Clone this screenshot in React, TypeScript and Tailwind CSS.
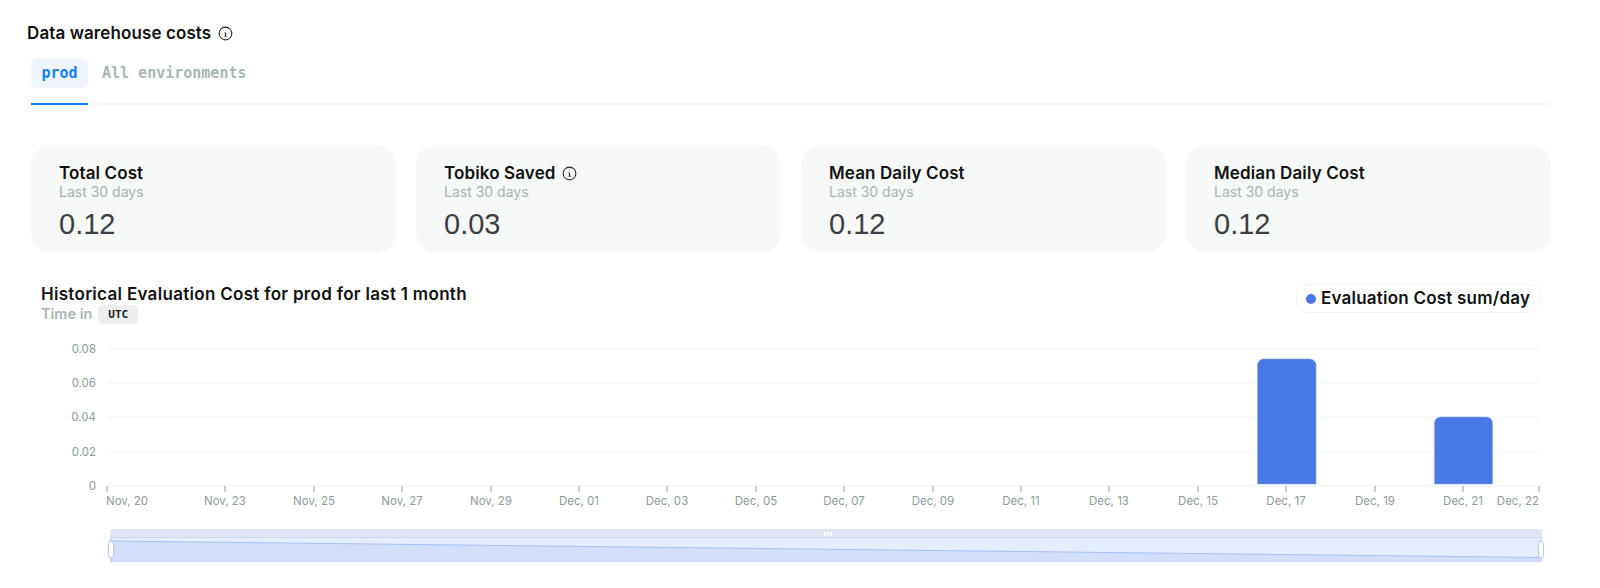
import React from 'react';

const INTER = "font-['Inter','Liberation_Sans',sans-serif]";

const stats = [
  { title: 'Total Cost', value: '0.12' },
  { title: 'Tobiko Saved', value: '0.03', info: true },
  { title: 'Mean Daily Cost', value: '0.12' },
  { title: 'Median Daily Cost', value: '0.12' },
];

const gridLines = [
  { y: 348, label: '0.08' },
  { y: 382, label: '0.06' },
  { y: 416, label: '0.04' },
  { y: 451, label: '0.02' },
];

const ticks = [
  { x: 107, label: 'Nov, 20', anchor: 'start' },
  { x: 225, label: 'Nov, 23' },
  { x: 314, label: 'Nov, 25' },
  { x: 402, label: 'Nov, 27' },
  { x: 491, label: 'Nov, 29' },
  { x: 579, label: 'Dec, 01' },
  { x: 667, label: 'Dec, 03' },
  { x: 756, label: 'Dec, 05' },
  { x: 844, label: 'Dec, 07' },
  { x: 933, label: 'Dec, 09' },
  { x: 1021, label: 'Dec, 11' },
  { x: 1109, label: 'Dec, 13' },
  { x: 1198, label: 'Dec, 15' },
  { x: 1286, label: 'Dec, 17' },
  { x: 1375, label: 'Dec, 19' },
  { x: 1463, label: 'Dec, 21' },
  { x: 1539, label: 'Dec, 22', anchor: 'end' },
];

const InfoIcon: React.FC<{ size: number }> = ({ size }) => (
  <svg width={size} height={size} viewBox="0 0 16 16" fill="none" stroke="#222" strokeWidth="1.1">
    <circle cx="8" cy="8" r="6.8" />
    <path d="M8 7.2v3.8M6.9 11h2.2M7 7.2h1" />
    <circle cx="8" cy="4.9" r="0.5" fill="#222" stroke="none" />
  </svg>
);

const StatCard: React.FC<{ title: string; value: string; info?: boolean }> = ({ title, value, info }) => (
  <div className="flex h-[108px] flex-col rounded-[20px] bg-[#f7f9f8] pl-[28px] pt-[19px]">
    <div className="flex items-center gap-[6px] text-[17px] font-semibold leading-[19px] tracking-[0.12px] text-[#111]">
      {title}
      {info && <InfoIcon size={15} />}
    </div>
    <div className="text-[14px] leading-[17px] text-[#a8b4b3]">Last 30 days</div>
    <div className="mt-[7px] font-['Liberation_Sans',sans-serif] text-[29px] leading-[34px] text-[#3a3f45]">{value}</div>
  </div>
);

const CostChart: React.FC = () => (
  <svg className="mt-[7px] block" width={1520} height={258} viewBox="31 330 1520 258">
    {gridLines.map(({ y, label }) => (
      <g key={y}>
        <line x1={107} x2={1539} y1={y} y2={y} stroke="#f2f3f4" />
        <text x={96} y={y + 4} textAnchor="end" fontSize={11.5} fill="#8f9b9b" fontFamily="Inter">
          {label}
        </text>
      </g>
    ))}
    <text x={96} y={489} textAnchor="end" fontSize={11.5} fill="#8f9b9b" fontFamily="Inter">
      0
    </text>
    <line x1={107} x2={1539} y1={485} y2={485} stroke="#eef0f1" />
    <path d="M1257.5 483V364a6 6 0 0 1 6-6h46.500a6 6 0 0 1 6 6v119z" fill="#4878e3" stroke="#8ba9ee" strokeWidth="0.6" />
    <path d="M1434.500 483V422a6 6 0 0 1 6-6h46a6 6 0 0 1 6 6v61z" fill="#4878e3" stroke="#8ba9ee" strokeWidth="0.6" />
    {ticks.map(({ x, label, anchor }) => (
      <g key={label}>
        <line x1={x} x2={x} y1={485} y2={491} stroke="#93a0a0" />
        <text
          x={anchor === 'start' ? x - 1 : x}
          y={504}
          textAnchor={anchor ?? 'middle'}
          fontSize={11.5}
          fill="#8f9b9b"
          fontFamily="Inter"
        >
          {label}
        </text>
      </g>
    ))}
    {/* range slider */}
    <path d="M110 536v-6a2 2 0 0 1 2-2h1428a2 2 0 0 1 2 2v6z" fill="#e0e5f3" />
    <rect x={110} y={536} width={1431} height={25} fill="#d3defa" />
    <path d="M110 540L1541 556.500V536.500H110z" fill="#e5ecfd" />
    <line x1={110} x2={1541} y1={540} y2={556.5} stroke="#a9c0f7" />
    <line x1={110} x2={1541} y1={536.5} y2={536.5} stroke="#cdd6ee" />
    <rect x={824} y={531} width={2} height={3.5} fill="#fff" />
    <rect x={827} y={531} width={2} height={3.5} fill="#fff" />
    <rect x={830} y={531} width={2} height={3.5} fill="#fff" />
    <line x1={111} x2={111} y1={536} y2={561} stroke="#b9c7ea" />
    <line x1={1541} x2={1541} y1={536} y2={561} stroke="#b9c7ea" />
    <rect x={108.5} y={540.5} width={5} height={16} rx={2} fill="#fff" stroke="#b9c7ea" />
    <rect x={1538.5} y={540.5} width={5} height={16} rx={2} fill="#fff" stroke="#b9c7ea" />
  </svg>
);

export default function App() {
  return (
    <div className={`h-[588px] w-[1600px] overflow-hidden bg-white pl-[31px] pt-[23px] ${INTER}`}>
      <div className="w-[1520px]">
        <div className="-ml-[4px] flex items-center gap-[7px] text-[17px] font-semibold leading-[20px] tracking-[0.1px] text-[#111]">
          Data warehouse costs
          <InfoIcon size={15} />
        </div>
        <div className="mt-[15px] flex h-[47px] items-start gap-[14px] border-b-2 border-[#f6f7f8] font-['DejaVu_Sans_Mono',monospace] text-[15px] font-bold">
          <div className="-mb-[2px] h-[47px] border-b-2 border-[#0a84ff]">
            <div className="flex h-[30px] w-[57px] items-center justify-center rounded-[6px] bg-[#f1f6fe] pt-[1px] text-[#0f80fb]">prod</div>
          </div>
          <div className="flex h-[30px] items-center pt-[1px] text-[#a9b7b5]">All environments</div>
        </div>

        <div className="mt-[40px] grid grid-cols-4 gap-[20px]">
          {stats.map((stat) => (
            <StatCard key={stat.title} {...stat} />
          ))}
        </div>

        <div className="mt-[31px] flex items-start justify-between px-[10px]">
          <div>
            <div className="text-[17px] font-semibold leading-[20px] tracking-[0.3px] text-[#111]">
              Historical Evaluation Cost for prod for last 1 month
            </div>
            <div className="flex items-center gap-[6px] text-[14.5px] font-semibold leading-[20px] text-[#a8b4b3]">
              Time in
              <span className="rounded-[5px] bg-[#edeef0] px-[10px] font-['DejaVu_Sans_Mono',monospace] text-[11px] font-bold leading-[19px] text-[#222]">UTC</span>
            </div>
          </div>
          <div className="flex h-[29px] w-[245px] items-center gap-[5px] rounded-[12px] border border-[#f2f3f5] pl-[9px] pt-[1px] text-[17px] font-semibold tracking-[0.22px] text-[#111]">
            <span className="h-[10px] w-[10px] rounded-full bg-[#4878e3]" />
            Evaluation Cost sum/day
          </div>
        </div>

        <CostChart />
      </div>
    </div>
  );
}
